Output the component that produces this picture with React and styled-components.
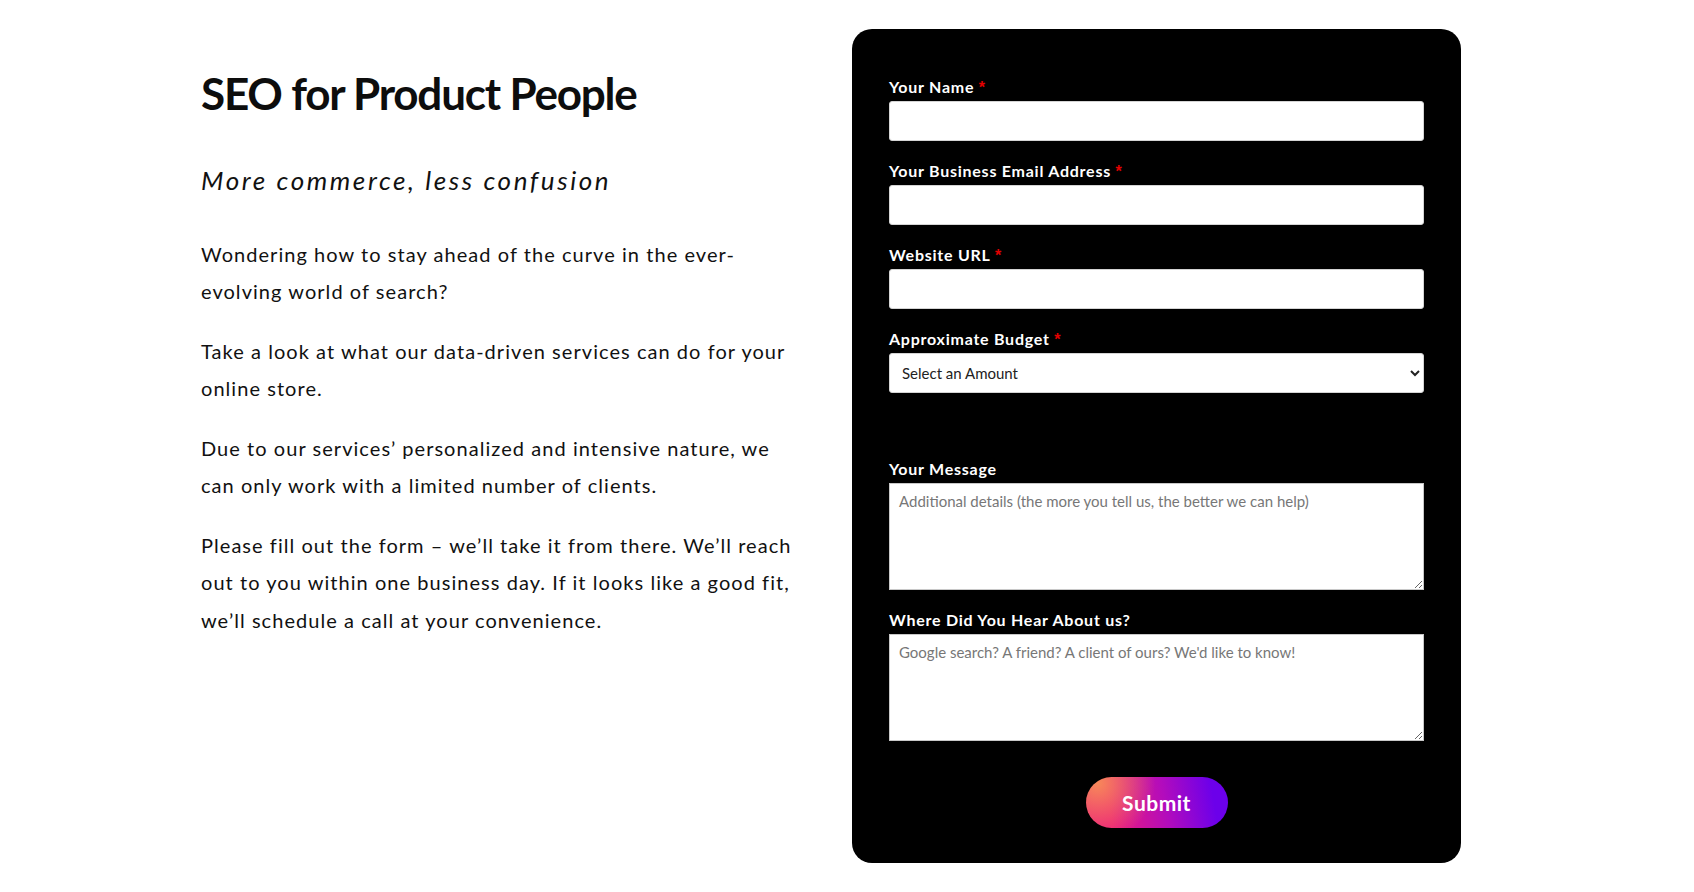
import React from "react";
import styled, { createGlobalStyle } from "styled-components";

const GlobalStyle = createGlobalStyle`
  * {
    box-sizing: border-box;
  }
  body {
    margin: 0;
    background: #fff;
    font-family: Lato, "Noto Sans", sans-serif;
    color: #111;
  }
`;

const fields = [
  { id: "name", label: "Your Name", required: true },
  { id: "email", label: "Your Business Email Address", required: true },
  { id: "url", label: "Website URL", required: true },
];

const App = () => {
  return (
    <>
      <GlobalStyle />
      <StPage>
        <StIntro>
          <StTitle>SEO for Product People</StTitle>
          <StSubtitle>More commerce, less confusion</StSubtitle>
          <StText>
            Wondering how to stay ahead of the curve in the ever-evolving world of
            search?
          </StText>
          <StText>
            Take a look at what our data-driven services can do for your online
            store.
          </StText>
          <StText>
            Due to our services’ personalized and intensive nature, we can only
            work with a limited number of clients.
          </StText>
          <StText>
            Please fill out the form – we’ll take it from there. We’ll reach out
            to you within one business day. If it looks like a good fit, we’ll
            schedule a call at your convenience.
          </StText>
        </StIntro>

        <StCard onSubmit={(e) => e.preventDefault()}>
          {fields.map((field) => (
            <StField key={field.id}>
              <StLabel htmlFor={field.id}>
                {field.label}
                {field.required && <StStar> *</StStar>}
              </StLabel>
              <StInput id={field.id} type="text" />
            </StField>
          ))}

          <StField $extra={46}>
            <StLabel htmlFor="budget">
              Approximate Budget<StStar> *</StStar>
            </StLabel>
            <StSelect id="budget" defaultValue="">
              <option value="">Select an Amount</option>
              <option value="1">$5,000 - $10,000</option>
              <option value="2">$10,000 - $25,000</option>
              <option value="3">$25,000+</option>
            </StSelect>
          </StField>

          <StField>
            <StLabel htmlFor="message">Your Message</StLabel>
            <StTextarea
              id="message"
              placeholder="Additional details (the more you tell us, the better we can help)"
            />
          </StField>

          <StField>
            <StLabel htmlFor="source">Where Did You Hear About us?</StLabel>
            <StTextarea
              id="source"
              placeholder="Google search? A friend? A client of ours? We'd like to know!"
            />
          </StField>

          <StActions>
            <StSubmit type="submit">Submit</StSubmit>
          </StActions>
        </StCard>
      </StPage>
    </>
  );
};

export default App;

const StPage = styled.main`
  display: flex;
  align-items: flex-start;
  gap: 51px;
  padding: 29px 0 0 201px;
  min-height: 892px;
`;

const StIntro = styled.section`
  width: 600px;
  padding-top: 38px;
`;

const StTitle = styled.h1`
  margin: 0;
  font-size: 44px;
  line-height: 1.2;
  font-weight: 700;
  letter-spacing: -1.2px;
  color: #0d0d0d;
`;

const StSubtitle = styled.h2`
  margin: 45px 0 41px;
  font-size: 26px;
  line-height: 30px;
  font-weight: 400;
  font-style: italic;
  letter-spacing: 2.6px;
  color: #111;
`;

const StText = styled.p`
  margin: 0 0 22px;
  font-size: 20px;
  line-height: 37.5px;
  font-weight: 400;
  letter-spacing: 1.05px;
  color: #111;
`;

const StCard = styled.form`
  width: 609px;
  background: #000;
  border-radius: 20px;
  padding: 48px 37px 35px;
  display: flex;
  flex-direction: column;
`;

const StField = styled.div`
  display: flex;
  flex-direction: column;
  margin-bottom: ${({ $extra }) => 20 + ($extra || 0)}px;
`;

const StLabel = styled.label`
  display: block;
  height: 19px;
  font-size: 16px;
  line-height: 19px;
  font-weight: 700;
  letter-spacing: 0.75px;
  color: #fff;
  margin-bottom: 5px;
`;

const StStar = styled.span`
  color: #e10000;
  font-family: "Liberation Sans", sans-serif;
  font-size: 16px;
  font-weight: 700;
  line-height: 0;
  letter-spacing: 0;
`;

const StInput = styled.input`
  height: 40px;
  width: 100%;
  border: 1px solid #d4d4d4;
  border-radius: 3px;
  background: #fff;
  padding: 0 12px;
  font-family: Lato, sans-serif;
  font-size: 15px;
  outline: none;
`;

const StSelect = styled.select`
  height: 40px;
  width: 100%;
  border: 1px solid #d4d4d4;
  border-radius: 3px;
  background: #fff;
  padding: 0 6px 0 8px;
  font-family: Lato, sans-serif;
  font-size: 15px;
  color: #222;
  outline: none;
`;

const StTextarea = styled.textarea`
  height: 107px;
  width: 100%;
  border: 1px solid #c8c8c8;
  border-radius: 0;
  background: #fff;
  padding: 8px 9px;
  font-family: Lato, sans-serif;
  font-size: 15px;
  line-height: 1.3;
  color: #222;
  outline: none;
  resize: vertical;

  &::placeholder {
    color: #777;
  }
`;

const StActions = styled.div`
  display: flex;
  justify-content: center;
  padding-top: 16px;
`;

const StSubmit = styled.button`
  width: 142px;
  height: 51px;
  border: none;
  border-radius: 26px;
  background: radial-gradient(
      circle at 8% 12%,
      rgba(248, 142, 88, 0.95) 0%,
      rgba(248, 142, 88, 0) 42%
    ),
    linear-gradient(80deg, #ec1c7a 18%, #b30cbc 55%, #6c00ea 88%);
  color: #fff;
  font-family: Lato, sans-serif;
  font-size: 21px;
  font-weight: 700;
  letter-spacing: 0.5px;
  cursor: pointer;
`;
